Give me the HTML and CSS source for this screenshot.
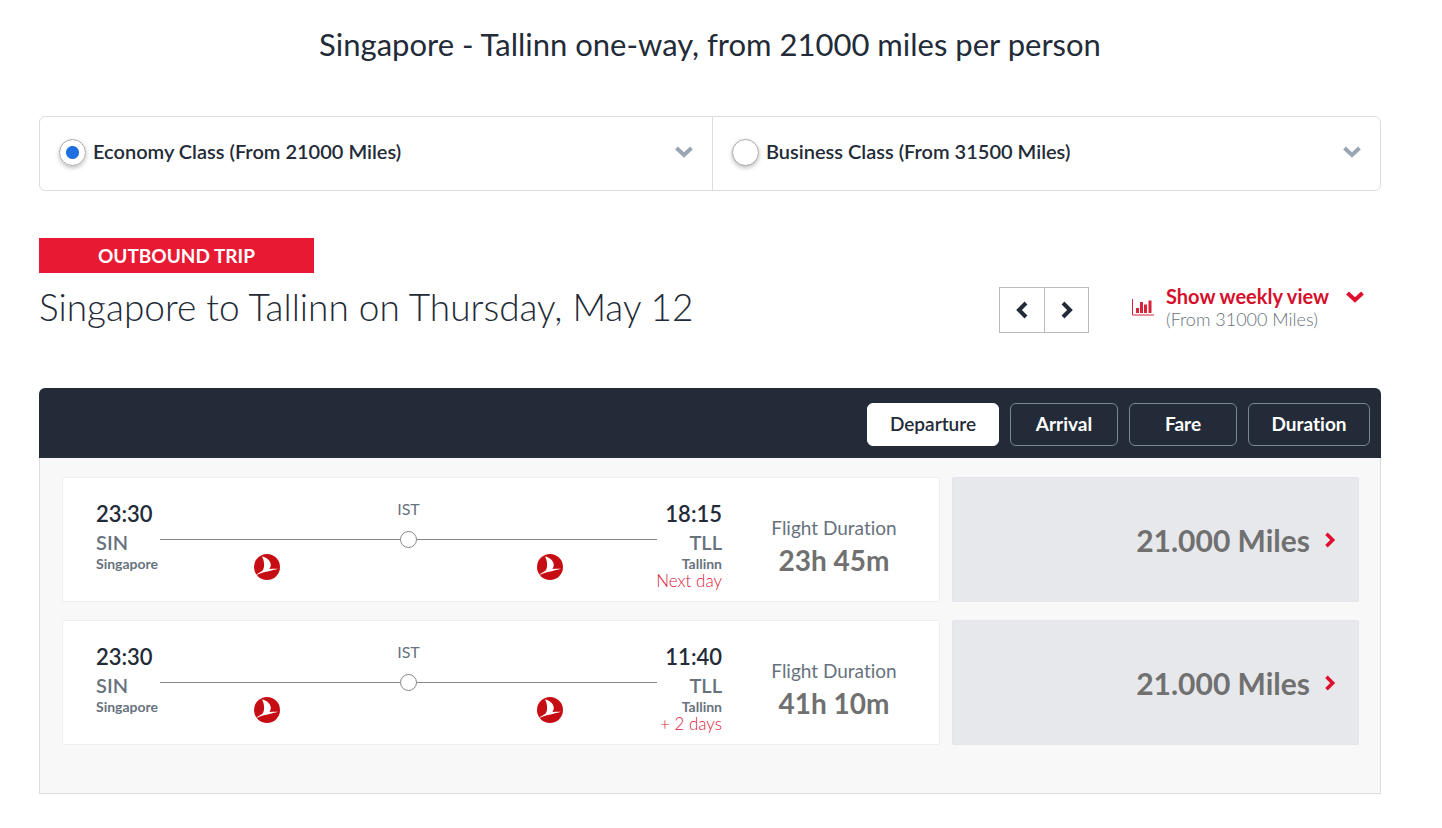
FILE: index.html
```
<!DOCTYPE html>
<html lang="en">
<head>
<meta charset="utf-8">
<meta name="viewport" content="width=device-width, initial-scale=1">
<title>Singapore - Tallinn award flights</title>
<link rel="stylesheet" href="styles.css">
</head>
<body>
<svg class="defs" aria-hidden="true">
  <symbol id="airline" viewBox="0 0 26 26">
    <circle cx="13" cy="13" r="13" fill="#c70d14"/>
    <path fill="#fff" d="M8 2.500C12 3 16.800 6.500 16.800 10.800C16.800 12.300 16.200 13.800 15.400 15C18 14.900 21 14.600 24 14.800C18 16.800 9.500 17.800 3 20.800C2.600 21 2.500 20.300 3 20C5 18.800 7 18 8.600 16.500C11 13.500 10.400 6.500 8 2.500Z"/>
  </symbol>
  <symbol id="down" viewBox="0 0 18 12"><path d="M1.500 2 9 9 16.500 2" fill="none" stroke="currentColor" stroke-width="4"/></symbol>
  <symbol id="right" viewBox="0 0 12 18"><path d="M2 2 9 9 2 16" fill="none" stroke="currentColor" stroke-width="4"/></symbol>
</svg>
<main class="page">
  <h1 class="title">Singapore - Tallinn one-way, from 21000 miles per person</h1>

  <div class="cabins">
    <label class="cabin"><input class="radio" type="radio" name="cabin" checked><span class="cabin-name">Economy Class (From 21000 Miles)</span><svg class="chevron-down"><use href="#down"/></svg></label>
    <label class="cabin"><input class="radio" type="radio" name="cabin"><span class="cabin-name">Business Class (From 31500 Miles)</span><svg class="chevron-down"><use href="#down"/></svg></label>
  </div>

  <div class="badge">OUTBOUND TRIP</div>
  <div class="trip">
    <h2 class="trip-name">Singapore to Tallinn on Thursday, May 12</h2>
    <div class="day-nav">
      <button class="day" aria-label="Previous day"><svg class="day-icon flip"><use href="#right"/></svg></button>
      <button class="day" aria-label="Next day"><svg class="day-icon"><use href="#right"/></svg></button>
    </div>
    <button class="weekly">
      <svg class="chart" viewBox="0 0 22 17"><path d="M.5 0V16H22" fill="none" stroke="#d6243c"/><path d="M4 9h3v5H4zM8 3h3v11H8zM12 5.500h3V14h-3zM16.500 1.500h3V14h-3z" fill="#d6243c"/></svg>
      <span class="weekly-text"><span class="weekly-title">Show weekly view</span><span class="weekly-from">(From 31000 Miles)</span></span>
      <svg class="chevron-down red"><use href="#down"/></svg>
    </button>
  </div>

  <section class="panel">
    <div class="sorts">
      <button class="sort wide active">Departure</button>
      <button class="sort">Arrival</button>
      <button class="sort">Fare</button>
      <button class="sort medium">Duration</button>
    </div>
    <div class="flights">
      <article class="flight">
        <div class="itinerary">
          <div class="stop"><span class="time">23:30</span><span class="code">SIN</span><span class="city">Singapore</span></div>
          <div class="route"><span class="via">IST</span><div class="line"><span class="node"></span></div><div class="carriers"><svg class="carrier"><use href="#airline"/></svg><svg class="carrier"><use href="#airline"/></svg></div></div>
          <div class="stop end"><span class="time">18:15</span><span class="code">TLL</span><span class="city">Tallinn</span><span class="later">Next day</span></div>
          <div class="length"><span class="length-label">Flight Duration</span><span class="length-value">23h 45m</span></div>
        </div>
        <button class="fare">21.000 Miles<svg class="fare-icon"><use href="#right"/></svg></button>
      </article>
      <article class="flight">
        <div class="itinerary">
          <div class="stop"><span class="time">23:30</span><span class="code">SIN</span><span class="city">Singapore</span></div>
          <div class="route"><span class="via">IST</span><div class="line"><span class="node"></span></div><div class="carriers"><svg class="carrier"><use href="#airline"/></svg><svg class="carrier"><use href="#airline"/></svg></div></div>
          <div class="stop end"><span class="time">11:40</span><span class="code">TLL</span><span class="city">Tallinn</span><span class="later">+ 2 days</span></div>
          <div class="length"><span class="length-label">Flight Duration</span><span class="length-value">41h 10m</span></div>
        </div>
        <button class="fare">21.000 Miles<svg class="fare-icon"><use href="#right"/></svg></button>
      </article>
    </div>
  </section>
</main>
</body>
</html>
```
FILE: styles.css
```
* { box-sizing: border-box; }
body { margin: 0; background: #fff; color: #232b38; font-family: Lato, "Open Sans", sans-serif; font-variant-ligatures: none; }
button { font: inherit; color: inherit; cursor: pointer; }
.defs { display: none; }
.page { padding: 24px 61px 32px 39px; }
.title { margin: 0 0 52px; font-size: 31px; line-height: 40px; font-weight: 400; text-align: center; }

.cabins { display: grid; grid-template-columns: 672fr 668fr; border: 1px solid #ddd; border-radius: 6px; }
.cabin { display: flex; align-items: center; gap: 7px; height: 73px; padding: 0 19px 3px; font-size: 20px; font-weight: 600; }
.cabin + .cabin { border-left: 1px solid #ddd; }
.cabin-name { flex: 1; padding-bottom: 2px; }
.radio { appearance: none; width: 27px; height: 27px; margin: 0; border: 1px solid #aaa; border-radius: 50%; background: #fff; box-shadow: 0 2px 4px rgba(0, 0, 0, .25); }
.radio:checked { background: radial-gradient(circle, #1e70e0 6px, #fff 7px); }
.chevron-down { width: 18px; height: 12px; color: #9ba6b5; }

.badge { width: 275px; margin-top: 47px; background: #e81932; color: #fff; font-size: 19px; line-height: 35px; font-weight: 700; text-align: center; }
.trip { display: flex; align-items: center; margin: 10px 0 51px; }
.trip-name { flex: 1; margin: 0; padding-bottom: 6px; font-size: 37px; line-height: 48px; font-weight: 300; }
.day-nav { display: flex; margin-right: 43px; border: 1px solid #bbb; }
.day { display: grid; place-items: center; width: 44px; height: 44px; padding: 0; border: 0; background: #fff; }
.day + .day { border-left: 1px solid #bbb; }
.day-icon { width: 12px; height: 18px; }
.flip { transform: scaleX(-1); }
.weekly { display: flex; align-items: center; padding: 0 0 5px; margin-right: 17px; border: 0; background: none; text-align: left; }
.chart { width: 22px; height: 17px; margin-right: 12px; }
.weekly-text { display: flex; flex-direction: column; width: 180px; }
.weekly-title { color: #d60f2c; font-size: 20px; line-height: 23px; font-weight: 700; }
.weekly-from { color: #68727c; font-size: 18px; line-height: 22px; font-weight: 300; }
.red { align-self: flex-start; margin-top: 6px; color: #e00e2e; }

.panel { border-radius: 6px 6px 0 0; overflow: hidden; }
.sorts { display: flex; justify-content: flex-end; gap: 11px; padding: 15px 11px 12px; background: #232b38; }
.sort { width: 108px; height: 43px; padding: 0 0 2px; border: 1px solid #7c8592; border-radius: 6px; background: none; color: #fff; font-size: 19px; font-weight: 700; }
.medium { width: 122px; }
.wide { width: 132px; }
.active { border-color: #fff; background: #fff; color: #232b38; font-weight: 600; }
.flights { display: grid; gap: 18px; padding: 19px 21px 48px 22px; border: 1px solid #ddd; border-top: 0; background: #f8f8f8; }
.flight { display: grid; grid-template-columns: 878fr 407fr; gap: 12px; }
.itinerary { display: flex; padding: 20px 41px 10px 33px; border: 1px solid #eee; border-radius: 2px; background: #fff; }
.stop { display: flex; flex-direction: column; width: 64px; padding-top: 1px; color: #67727e; }
.end { width: 65px; align-items: flex-end; }
.time { color: #232b38; font-size: 22px; line-height: 30px; font-weight: 600; }
.code { font-size: 20px; line-height: 26px; font-weight: 600; }
.city { font-size: 14px; line-height: 18px; font-weight: 700; white-space: nowrap; }
.later { color: #dc2040; font-size: 17px; line-height: 16px; font-weight: 300; white-space: nowrap; }
.route { flex: 1; text-align: center; }
.via { display: block; color: #67727e; font-size: 16px; line-height: 22px; }
.line { display: flex; align-items: center; justify-content: center; height: 38px; background: linear-gradient(#888, #888) center / 100% 1px no-repeat; }
.node { width: 17px; height: 17px; border: 1px solid #888; border-radius: 50%; background: #fff; }
.carriers { display: flex; justify-content: space-between; padding: 0 19%; margin-top: -4px; }
.carrier { width: 26px; height: 26px; }
.length { width: 128px; margin-left: 48px; padding-top: 16px; text-align: center; white-space: nowrap; display: flex; flex-direction: column; align-items: center; }
.length-label { color: #67727e; font-size: 19px; line-height: 28px; }
.length-value { color: #707070; font-size: 28px; line-height: 36px; font-weight: 700; }
.fare { display: flex; align-items: center; justify-content: flex-end; gap: 14px; height: 125px; padding: 0 22px 0 0; border: 1px solid #e4e5e8; border-radius: 2px; background: #e7e8eb; color: #707070; font-size: 30px; font-weight: 700; }
.fare-icon { width: 12px; height: 16px; color: #e00e2e; }
```
